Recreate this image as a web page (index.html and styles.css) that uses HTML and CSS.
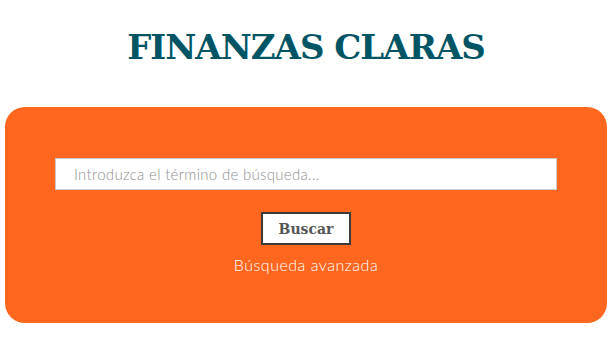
FILE: index.html
```html
<!DOCTYPE html>
<html lang="es">
<head>
    <meta charset="UTF-8">
    <meta name="viewport" content="width=device-width, initial-scale=1.0">
    <title>Finanzas Claras</title>
    <link rel="stylesheet" href="styles.css">
</head>
<body>

    <!-- Cabecera -->
    <h1 class="site-title">FINANZAS CLARAS</h1>

    <!-- Caja de búsqueda -->
    <div class="search-box">
        <form class="search-form" onsubmit="return false;">
            <input type="text" class="search-input" placeholder="Introduzca el término de búsqueda...">
            <button type="submit" class="search-btn">Buscar</button>
            <a href="#" class="advanced-link">Búsqueda avanzada</a>
        </form>
    </div>

</body>
</html>
```

FILE: styles.css
```css
body {
    font-family: "Lato", "Open Sans", sans-serif;
    margin: 0;
    padding: 0;
    background-color: #ffffff;
}

/* Título */
.site-title {
    font-family: "DejaVu Serif", serif;
    font-weight: bold;
    font-size: 34px;
    line-height: 40px;
    color: #005565;
    text-align: center;
    margin: 0;
    padding-top: 27px;
    height: 107px;
    box-sizing: border-box;
    letter-spacing: -1px;
}

/* Caja naranja */
.search-box {
    background-color: #ff661e;
    border-radius: 20px;
    margin: 0 5px;
    height: 216px;
    padding: 51px 50px 0 50px;
    box-sizing: border-box;
}

.search-form {
    display: flex;
    flex-direction: column;
    align-items: center;
}

.search-input {
    width: 100%;
    height: 32px;
    box-sizing: border-box;
    border: 1px solid #c9c9c9;
    background-color: #ffffff;
    padding: 0 18px;
    font-family: "Lato", sans-serif;
    font-weight: 300;
    font-size: 15px;
    letter-spacing: 0.3px;
    color: #555;
    outline: none;
}

.search-input::placeholder {
    color: #8f8f8f;
}

.search-btn {
    margin-top: 22px;
    width: 90px;
    height: 33px;
    background-color: #ffffff;
    border: 2px solid #3a3a3a;
    font-family: "DejaVu Serif", serif;
    font-weight: bold;
    font-size: 14px;
    color: #555555;
    cursor: pointer;
}

.advanced-link {
    margin-top: 10px;
    color: #ffffff;
    text-decoration: none;
    font-weight: 300;
    font-size: 16px;
    letter-spacing: 0.5px;
}
```
